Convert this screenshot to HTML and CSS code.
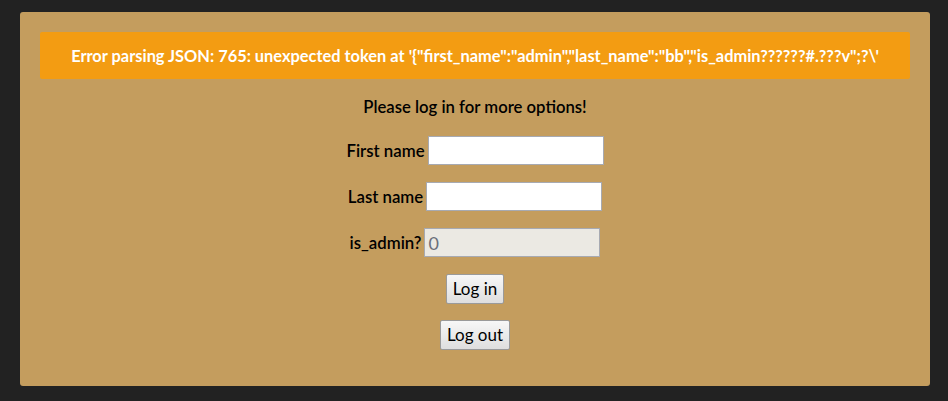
FILE: index.html
```html
<!DOCTYPE html>
<html>
<head>
<meta charset="utf-8">
<link rel="stylesheet" href="styles.css">
</head>
<body>
<div class="panel">
  <div class="alert">Error parsing JSON: 765: unexpected token at '{"first_name":"admin","last_name":"bb","is_admin??????#.???v";?\'</div>
  <form class="form">
    <p class="intro">Please log in for more options!</p>
    <div class="row"><label>First name</label> <input type="text" class="field"></div>
    <div class="row"><label>Last name</label> <input type="text" class="field"></div>
    <div class="row"><label>is_admin?</label> <input type="text" class="field" value="0" disabled></div>
    <div class="row"><button type="button" class="btn">Log in</button></div>
    <div class="row"><button type="button" class="btn">Log out</button></div>
  </form>
</div>
</body>
</html>
```
FILE: styles.css
```css
html, body {
  margin: 0;
  padding: 0;
  background: #222222;
}
body {
  padding: 12px 18px 15px 20px;
  font-family: Lato, "Open Sans", sans-serif;
  color: #111;
}
.panel {
  background: #c49d5e;
  border-radius: 3px;
  padding: 20px 20px 37px;
}
.alert {
  background: #f39c12;
  color: #fff;
  font-weight: bold;
  font-size: 16.4px;
  text-align: center;
  height: 47px;
  line-height: 47px;
  border-radius: 2px;
}
.form {
  display: flex;
  flex-direction: column;
  align-items: center;
  gap: 17px;
  margin: 18px 0 0;
}
.intro {
  margin: 0 0 2px;
  font-size: 16.7px;
  font-weight: 600;
  line-height: 20px;
  color: #000;
}
.row {
  display: flex;
  align-items: center;
  gap: 3px;
  font-size: 16.8px;
  font-weight: 600;
  height: 29px;
  color: #000;
}
.field {
  box-sizing: border-box;
  width: 176px;
  height: 29px;
  border: 1px solid #a7aab2;
  background: #fff;
  font-family: Lato, sans-serif;
  font-size: 18px;
  padding: 0 3px;
  margin: 0;
}
.field:disabled {
  background: #ebe9e3;
  color: #6a6f7a;
}
.btn {
  box-sizing: border-box;
  height: 30px;
  padding: 0 6px;
  font-family: Lato, sans-serif;
  font-size: 17px;
  font-weight: normal;
  color: #000;
  border: 1px solid #9a9a9a;
  border-radius: 2px;
  background: linear-gradient(#f7f7f7, #dedede);
}
```
